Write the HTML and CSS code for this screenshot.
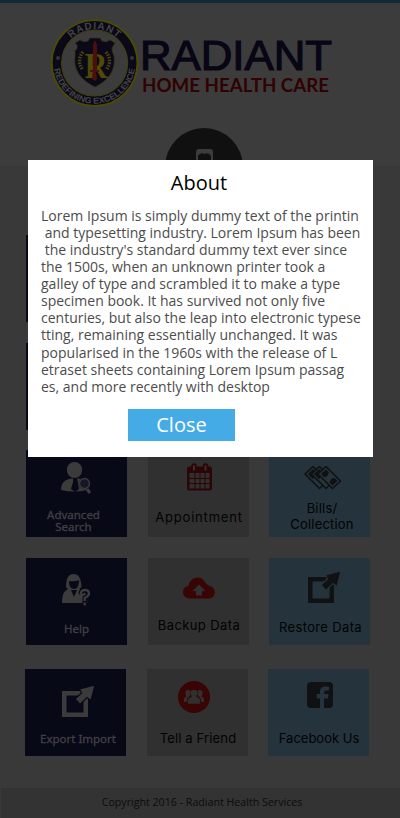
FILE: index.html
```html
<!DOCTYPE html>
<html lang="en">
<head>
<meta charset="utf-8">
<title>Radiant Home Health Care</title>
<link rel="stylesheet" href="styles.css">
</head>
<body>
<div class="app">
  <header class="header">
    <svg class="brand" width="300" height="104" viewBox="45 10 300 104">
      <defs>
        <path id="arc-top" d="M60.600 63A34 34 0 0 1 128.600 63"/>
        <path id="arc-bottom" d="M53.800 63A40.800 40.800 0 0 0 135.400 63"/>
      </defs>
      <circle cx="94.600" cy="63" r="43" fill="#0b0817" stroke="#4a4908" stroke-width="2.200"/>
      <circle cx="94.600" cy="63" r="33" fill="#3c3c3c" stroke="#424210" stroke-width="1.200"/>
      <circle cx="58" cy="58" r="2" fill="#323238"/>
      <circle cx="132" cy="58" r="2" fill="#323238"/>
      <text class="seal"><textPath href="#arc-top" startOffset="50%" text-anchor="middle">RADIANT</textPath></text>
      <text class="seal seal-small"><textPath href="#arc-bottom" startOffset="50%" text-anchor="middle" textLength="116" lengthAdjust="spacingAndGlyphs">REDEFINING EXCELLENCE</textPath></text>
      <path d="M75 51q3-3 2-6l-2-2 5-3q4 3 8 1l2-3h10l2 3q4 2 8-1l5 3-3 5q0 4 2 8c2 16-7 25-19 31-12-6-22-15-20-31z" fill="#0b0817" stroke="#35350f" stroke-width=".7"/>
      <path d="M83 52q-7 9 0 18M106 52q7 9 0 18" fill="none" stroke="#4a4510" stroke-width="3.500" stroke-dasharray="1.600 1.200"/>
      <text x="84.500" y="77.500" class="monogram" textLength="23" lengthAdjust="spacingAndGlyphs">R</text>
      <path d="M95 40l2 5v25h2v2h-3l1 7-2 2-3-2 1-7h-3v-2h3V45z" fill="#4c100c"/>
      <text x="140" y="70" class="brand-name" textLength="192" lengthAdjust="spacingAndGlyphs">RADIANT</text>
      <text x="142" y="92" class="brand-sub" textLength="187" lengthAdjust="spacingAndGlyphs">HOME HEALTH CARE</text>
    </svg>
    <div class="phone">
      <svg width="78" height="78" viewBox="0 0 78 78"><path d="M31 32v-8q0-3 3-3h11q3 0 3 3v8h-2v-4q-2-4-6.500-2-4.500-2-6.500 2v4z" fill="#3c3c3c"/></svg>
    </div>
  </header>
  <main class="grid">
    <div class="row"><div class="tile navy"></div><div class="tile gray"></div><div class="tile blue"></div></div>
    <div class="row"><div class="tile navy"></div><div class="tile gray"></div><div class="tile blue"></div></div>
    <div class="row">
      <div class="tile navy">
        <svg width="101" height="50" viewBox="26 450 101 50">
          <g fill="#3b3b3c"><ellipse cx="74.500" cy="470" rx="7.700" ry="8"/><path d="M61 490q0-9 8-11l5.500-1 7 1 5 11q-12 3-25.500 0z"/></g>
          <path d="M73 478h4l2 11-4 3-4-3 2-7z" fill="#080917"/>
          <circle cx="84.500" cy="483.500" r="5.800" fill="#080917"/>
          <circle cx="84.500" cy="483.500" r="5" fill="#151626" stroke="#3b3b3c" stroke-width="1.400"/>
          <path d="M87 489l3 4" stroke="#3b3b3c" stroke-width="3"/>
        </svg>
        <span class="label light advanced">Advanced<br>Search</span>
      </div>
      <div class="tile gray">
        <svg width="101" height="50" viewBox="148 450 101 50">
          <rect x="187" y="466.500" width="25" height="24" rx="2.500" fill="#2c0505"/>
          <path d="M189.500 473h5v5h-5zm6 0h4v5h-4zm5 0h4v5h-4zm5 0h4v5h-4zM189.500 479h5v4h-5zm6 0h4v4h-4zm5 0h4v4h-4zm5 0h4v4h-4zM189.500 484h5v4.500h-5zm6 0h4v4.500h-4zm5 0h4v4.500h-4zm5 0h4v4.500h-4z" fill="#303030"/>
          <path d="M194 466v3M205.500 466v3" stroke="#2c0505" stroke-width="5.500" stroke-linecap="round"/>
          <path d="M194 466.300v3.400M205.500 466.300v3.400" stroke="#373032" stroke-width="2" stroke-linecap="round"/>
        </svg>
        <span class="label appointment">Appointment</span>
      </div>
      <div class="tile blue">
        <svg width="101" height="50" viewBox="269 450 101 50">
          <g fill="#25333c" stroke="#101112" stroke-width="1.600" stroke-linejoin="round">
            <path d="M305 474l8-7.500 14.500 14.500-8 7.500z"/><path d="M309 474l4-4 3 3-3 5z" fill="#101112"/>
            <path d="M311.500 474l8-7.500 14.500 14.500-8 7.500z"/><path d="M315 474l4-4 3 3-3 5z" fill="#101112"/>
            <path d="M318 474l8-7.500 14.500 14.500-8 7.500z"/>
          </g>
          <path d="M321 474l5-4.500 3 3-2 4-3 .500zM337.500 481l-5 4.500-3-3 2-4 3-.500z" fill="#101112"/>
        </svg>
        <span class="label bills">Bills/<br>Collection</span>
      </div>
    </div>
    <div class="row">
      <div class="tile navy">
        <svg width="101" height="50" viewBox="26 558 101 50">
          <path d="M66 587q0-13 7.500-13t8 13l-2 2q8 2 8 14H62q0-12 6-14z" fill="#3b3b3c"/>
          <path d="M69 581q6 1 10-1 0 9-5 9t-5-8zM71 590h6l-3 7z" fill="#080917"/>
          <path d="M81.500 594q-1-4 3.500-4 4 0 4 3.500 0 2.500-4 4.500v6" fill="none" stroke="#080917" stroke-width="5"/>
          <path d="M81 594.500q-.500-4.500 4-4.500 4 0 4 3.500 0 2.500-4.300 4.500v3M84.700 602.500v3" fill="none" stroke="#3b3b3c" stroke-width="2.400"/>
        </svg>
        <span class="label light help">Help</span>
      </div>
      <div class="tile gray">
        <svg width="101" height="50" viewBox="148 558 101 50">
          <path d="M190 598.500c-9 0-9-12-1.500-12.500 1-9 13-12 17-3q3 3 4 3c7 1 7 12 0 12.500z" fill="#390404"/>
          <path d="M199 584.500l6.500 6.500H202v4.500h-6V591h-3.500z" fill="#303030"/>
        </svg>
        <span class="label backup">Backup Data</span>
      </div>
      <div class="tile blue">
        <svg width="101" height="50" viewBox="269 558 101 50">
          <path d="M308 577h26v26h-26zm4.500 4.500v17h17v-17z" fill="#101112" fill-rule="evenodd"/>
          <path d="M321 585l6.500-6-2-4 15.500-4-4 15.500-4-3-7 7z" fill="#101112" stroke="#25333c" stroke-width="1.200"/>
        </svg>
        <span class="label restore">Restore Data</span>
      </div>
    </div>
    <div class="row last">
      <div class="tile navy">
        <svg width="101" height="50" viewBox="25 669 101 50">
          <path d="M62 691h26v26H62zm4.500 4.500v17h17v-17z" fill="#3b3b3c" fill-rule="evenodd"/>
          <path d="M75 699l6.500-6-2-4 15.500-4-4 15.500-4-3-7 7z" fill="#3b3b3c" stroke="#080917" stroke-width="1.200"/>
        </svg>
        <span class="label light export">Export Import</span>
      </div>
      <div class="tile gray">
        <svg width="101" height="50" viewBox="147 669 101 50">
          <circle cx="194" cy="697" r="16" fill="#390404"/>
          <g fill="#303030"><path d="M184 702v-3q0-2 2.500-2.500-3-6 1.500-6.500 4 0 2.500 5l-3 3-1 4zM204 702v-3q0-2-2.500-2.500 3-6-1.500-6.500-4 0-2.500 5l3 3 1 4z"/>
          <path d="M187.500 704v-4q0-2 4-3.500-4-7 2.500-7t2.500 7q4 1.500 4 3.500v4z" stroke="#390404" stroke-width=".7"/></g>
        </svg>
        <span class="label friend">Tell a Friend</span>
      </div>
      <div class="tile blue">
        <svg width="101" height="50" viewBox="268 669 101 50">
          <rect x="307" y="682" width="26" height="26" rx="4" fill="#101112"/>
          <path d="M320 708v-9.500h-3.300V694h3.300v-2.500q0-5 5.500-5h3.500v4h-2.500q-2.500 0-2.500 2v1.500h4.500l-.500 4.500h-4v9.500z" fill="#25333c"/>
        </svg>
        <span class="label facebook">Facebook Us</span>
      </div>
    </div>
  </main>
  <footer class="footer"><span>Copyright 2016 - Radiant Health Services</span></footer>
</div>
<div class="modal" role="dialog" aria-labelledby="title">
  <h1 id="title">About</h1>
  <p>Lorem Ipsum is simply dummy text of the printin
 and typesetting industry. Lorem Ipsum has been
 the industry's standard dummy text ever since
the 1500s, when an unknown printer took a
galley of type and scrambled it to make a type
specimen book. It has survived not only five
centuries, but also the leap into electronic typese
tting, remaining essentially unchanged. It was
popularised in the 1960s with the release of L
etraset sheets containing Lorem Ipsum passag
es, and more recently with desktop</p>
  <button class="close" type="button">Close</button>
</div>
</body>
</html>
```
FILE: styles.css
```css
* { box-sizing: border-box; }
body { margin: 0; width: 400px; height: 818px; overflow: hidden; background: #393939; font-family: "Open Sans", sans-serif; }
.app { height: 818px; display: flex; flex-direction: column; }
.header { height: 166px; flex: none; border-top: 3px solid #112a37; background: #3c3c3c; padding-top: 7px; display: flex; flex-direction: column; }
.brand { display: block; margin-left: 45px; flex: none; }
.seal { font: bold 10px "Liberation Sans", sans-serif; letter-spacing: 1px; fill: #444449; }
.seal-small { font-size: 8.500px; letter-spacing: 0; }
.monogram { font: bold 36px "Liberation Serif", serif; fill: #504908; }
.brand-name { font: 43px "Liberation Sans", sans-serif; fill: #080515; stroke: #080515; stroke-width: 1.2px; }
.brand-sub { font: bold 19.500px Lato, sans-serif; fill: #310202; }
.phone { width: 78px; height: 78px; flex: none; margin: 14px 0 0 165px; border-radius: 50%; background: #101010; }
.phone svg { display: block; }
.grid { padding: 69px 0 0 26px; display: flex; flex-direction: column; gap: 21px; height: 622px; flex: none; }
.row { display: grid; grid-template-columns: 101px 101px 101px; column-gap: 21px; height: 87px; }
.row .blue { margin-left: -1px; width: 101px; }
.row:nth-child(3) { margin-top: -1px; }
.row.last { margin: 3px 0 0 -1px; }
.tile { height: 87px; display: flex; flex-direction: column; align-items: center; overflow: hidden; }
.tile svg { display: block; flex: none; }
.navy { background: #080917; }
.gray { background: #303030; }
.blue { background: #25333c; }
.label { font: 13px/16px Inter, sans-serif; color: #020202; white-space: nowrap; text-align: center; }
.light { font: 11.500px/12px "Noto Sans", sans-serif; color: #404043; -webkit-text-stroke: .3px #404043; }
.advanced { margin: 9px 0 0 -6px; }
.appointment { margin: 9px 0 0 1px; letter-spacing: .8px; }
.bills { margin: 0 0 0 5px; letter-spacing: .2px; }
.help { margin-top: 15px; }
.backup { margin: 9px 0 0 1px; letter-spacing: .4px; }
.restore { margin: 11px 0 0 2px; letter-spacing: .35px; }
.export { margin: 14px 0 0 5px; }
.friend { margin: 11px 0 0 1px; letter-spacing: .15px; }
.facebook { margin: 11px 0 0 1px; }
.footer { margin-left: 1px; height: 30px; flex: none; background: #333; color: #0c0c0c; font-size: 10.650px; line-height: 28px; text-align: center; padding-left: 3px; }
.modal { position: absolute; left: 28px; top: 160px; width: 345px; height: 297px; background: #fff; padding: 9px 13px 0; }
.modal h1 { margin: 0 0 0 -3px; font-size: 20px; line-height: 28px; font-weight: 400; color: #000; text-align: center; }
.modal p { margin: 10px 0 0; font-size: 14px; line-height: 17.060px; color: #4c4c4c; white-space: pre; }
.close { display: block; margin: 14.340px 0 0 87px; width: 107px; height: 32px; padding: 0; border: 0; background: #45abe7; color: #fff; font: 20px/32px "Open Sans", sans-serif; }
```
